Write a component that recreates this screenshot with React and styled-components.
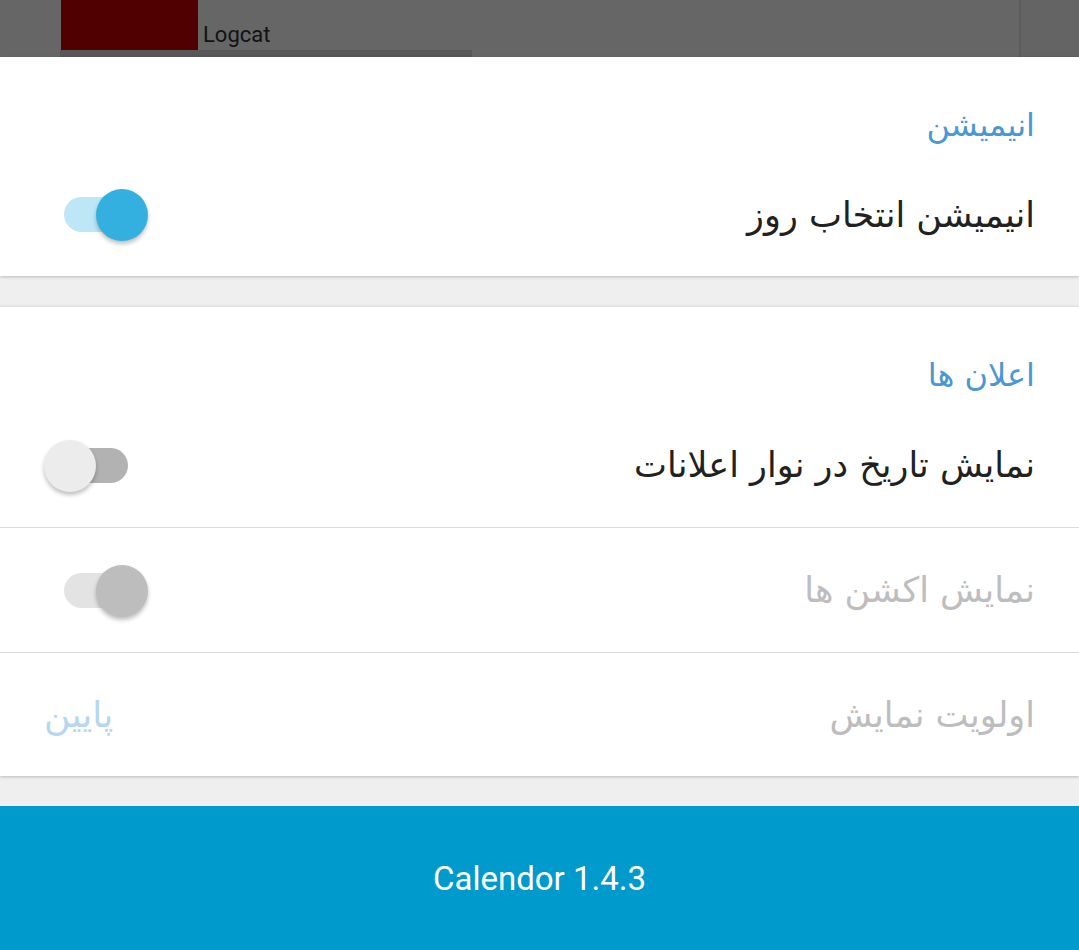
import React from 'react'
import styled, { createGlobalStyle } from 'styled-components'

const GlobalStyle = createGlobalStyle`
  html, body {
    margin: 0;
    padding: 0;
    background: #efefef;
  }
  body {
    font-family: "DejaVu Sans", "Noto Sans", sans-serif;
  }
`

function Switch({ on, disabled }) {
  return (
    <SwitchTrack $on={on} $disabled={disabled}>
      <SwitchThumb $on={on} $disabled={disabled} />
    </SwitchTrack>
  )
}

function App() {
  return (
    <Page>
      <GlobalStyle />
      <DimBar>
        <DimLeft>
          <DimRow>
            <RedBox />
            <LogcatLabel>Logcat</LogcatLabel>
          </DimRow>
          <DimStrip />
        </DimLeft>
        <DimRight />
      </DimBar>

      <Card>
        <SectionTitle>انیمیشن</SectionTitle>
        <Row>
          <Label>انیمیشن انتخاب روز</Label>
          <Switch on />
        </Row>
      </Card>

      <Gap />

      <Card $topLine>
        <SectionTitle>اعلان ها</SectionTitle>
        <Row $divider>
          <Label>نمایش تاریخ در نوار اعلانات</Label>
          <Switch />
        </Row>
        <Row $divider>
          <Label $disabled>نمایش اکشن ها</Label>
          <Switch on disabled />
        </Row>
        <Row>
          <Label $disabled>اولویت نمایش</Label>
          <Value>پایین</Value>
        </Row>
      </Card>

      <Gap />

      <Footer>Calendor 1.4.3</Footer>
    </Page>
  )
}

export default App

const Page = styled.div`
  width: 1079px;
  height: 950px;
  display: flex;
  flex-direction: column;
  background: #efefef;
  overflow: hidden;
`

const DimBar = styled.div`
  height: 57px;
  flex-shrink: 0;
  display: flex;
  background: #666666;
`

const DimLeft = styled.div`
  flex: 1;
  display: flex;
  flex-direction: column;
`

const DimRow = styled.div`
  height: 50px;
  display: flex;
  align-items: flex-end;
  padding-left: 61px;
`

const RedBox = styled.div`
  width: 137px;
  height: 50px;
  background: #500000;
`

const LogcatLabel = styled.span`
  font-family: Roboto, "Liberation Sans", sans-serif;
  font-size: 22px;
  line-height: 26px;
  color: #121212;
  margin-left: 5px;
  padding-bottom: 2px;
`

const DimStrip = styled.div`
  height: 7px;
  width: 412px;
  margin-left: 60px;
  background: #585858;
`

const DimRight = styled.div`
  width: 58px;
  border-left: 2px solid #5c5c5c;
  background: #646464;
`

const Card = styled.div`
  direction: rtl;
  flex-shrink: 0;
  background: #ffffff;
  box-shadow: 0 1px 3px rgba(0, 0, 0, 0.22);
  border-top: ${p => (p.$topLine ? '1px solid #e2e2e2' : 'none')};
  position: relative;
`

const SectionTitle = styled.div`
  height: 96px;
  box-sizing: border-box;
  padding: 47px 44px 0 0;
  font-size: 32px;
  line-height: 42px;
  color: #4a97d4;
`

const Row = styled.div`
  box-sizing: border-box;
  display: flex;
  align-items: center;
  justify-content: space-between;
  padding: 0 44px 0 44px;
  border-bottom: ${p => (p.$divider ? '1px solid #dcdcdc' : 'none')};
  height: ${p => (p.$divider ? '125px' : '123px')};
`

const Label = styled.div`
  font-size: 35px;
  line-height: 44px;
  color: ${p => (p.$disabled ? '#bdbdbd' : '#212121')};
`

const Value = styled.div`
  font-size: 36px;
  line-height: 44px;
  color: #b6d7ef;
`

const SwitchTrack = styled.div`
  position: relative;
  width: 64px;
  height: 35px;
  margin-left: 20px;
  border-radius: 18px;
  background: ${p =>
    p.$disabled ? '#e3e3e3' : p.$on ? '#bde6f6' : '#b2b2b2'};
`

const SwitchThumb = styled.div`
  position: absolute;
  top: -8px;
  left: ${p => (p.$on ? '32px' : '-20px')};
  width: 52px;
  height: 52px;
  border-radius: 50%;
  background: ${p =>
    p.$disabled ? '#bdbdbd' : p.$on ? '#33b0e0' : '#ececec'};
  box-shadow: 0 3px 4px rgba(0, 0, 0, 0.25);
`

const Gap = styled.div`
  height: 30px;
  flex-shrink: 0;
`

const Footer = styled.div`
  flex: 1;
  display: flex;
  align-items: center;
  justify-content: center;
  background: #009acd;
  color: #ffffff;
  font-family: Roboto, "Liberation Sans", sans-serif;
  font-size: 33px;
`
